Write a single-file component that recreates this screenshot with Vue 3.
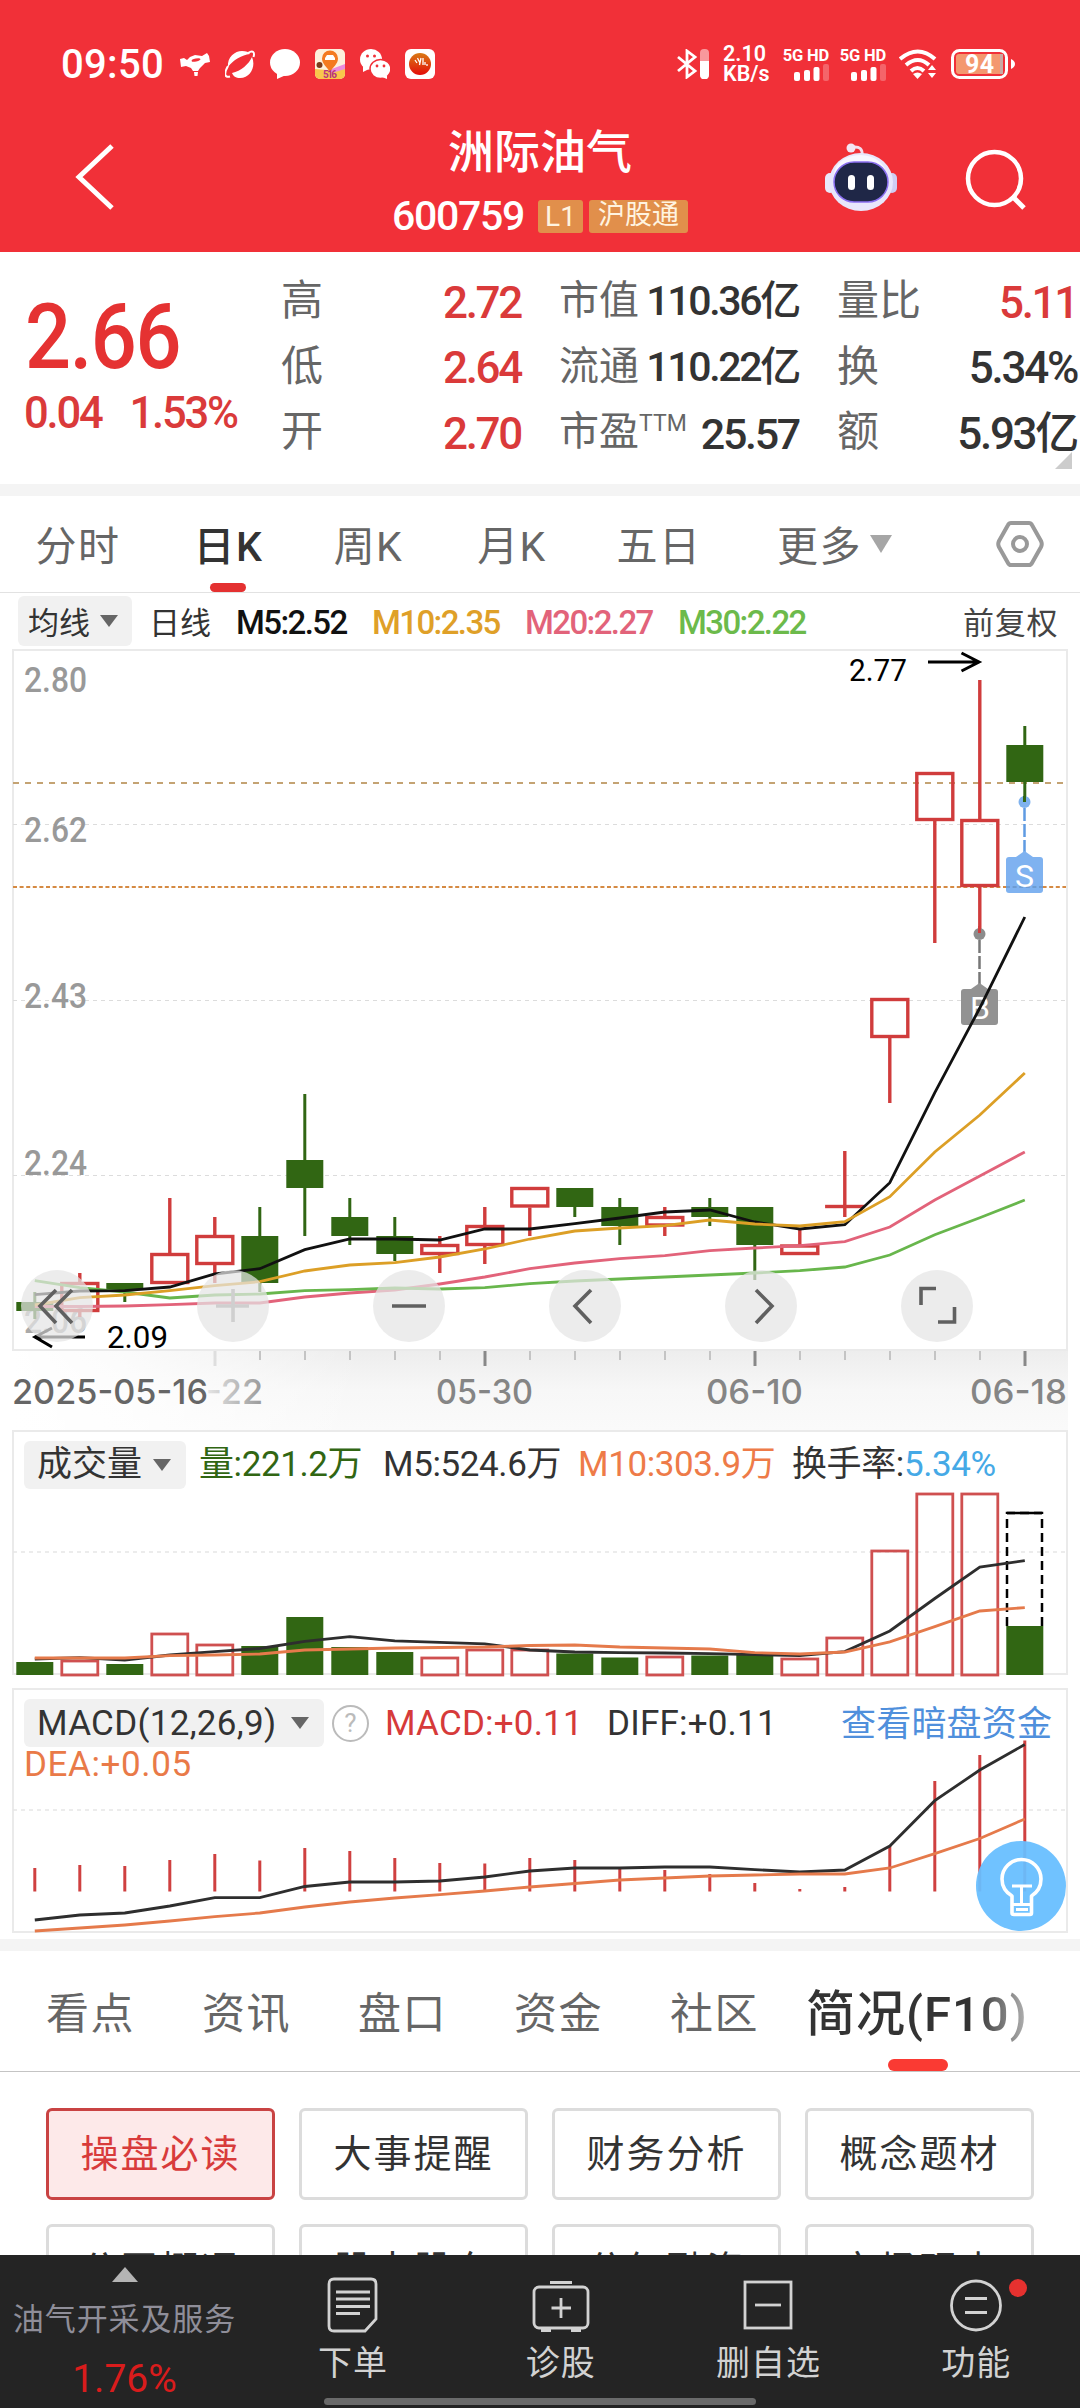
<template>
  <div class="page">
    <div class="statusbar">
      <span class="statusbar__time">09:50</span>
      <div class="statusbar__apps">
        <svg width="30" height="30" viewBox="0 0 30 30">
          <path d="M0 10L4 9L7 11L10 8L15 6L22 7L27 4L29 7L30 13L25 14L20 19L18 22H13L11 19L6 17L1 18Z" fill="#fff" />
          <ellipse cx="16" cy="11" rx="4.500" ry="1.500" fill="#f13038" transform="rotate(-12 16 11)" />
          <path d="M14 23H18L17.500 27H14.500Z" fill="#fff" />
        </svg>
        <svg width="30" height="30" viewBox="0 0 30 30">
          <path d="M3 18C2 8 10 2 17 2C21 2 24 3 25 5C17 6 8 11 3 18Z" fill="#fff" />
          <path d="M7 24C16 22 24 15 27 8C31 17 26 29 15 29C11 29 8 27 7 24Z" fill="#fff" />
          <path d="M3 17C-1 24 -1 29 5 27.500M23 4C28 1 30 3 28.500 8" fill="none" stroke="#fff" stroke-width="2" />
        </svg>
        <svg width="30" height="30" viewBox="0 0 30 30">
          <ellipse cx="15" cy="13.500" rx="15" ry="13.500" fill="#fff" />
          <path d="M7 22V30L16 26Z" fill="#fff" />
        </svg>
        <svg width="30" height="30" viewBox="0 0 30 30">
          <rect width="30" height="30" rx="5" fill="#fdf0dc" />
          <path d="M0 20L12 21L30 18V25A5 5 0 0 1 25 30H5A5 5 0 0 1 0 25Z" fill="#f9c64c" />
          <circle cx="4.500" cy="16" r="3" fill="#7b3b1d" />
          <path d="M14 21L30 15V20L17 24Z" fill="#ec8bdc" />
          <path d="M15 23C12 18 7 15 7 9.500A8 8 0 0 1 23 9.500C23 15 18 18 15 23Z" fill="#f47a20" />
          <path d="M10 11V9L12 6H18L20 9V11Z" fill="#fff" />
          <text x="8" y="29" font-size="10" font-weight="700" fill="#b8337e" textLength="14">516</text>
        </svg>
        <svg width="30" height="30" viewBox="0 0 30 30">
          <ellipse cx="11" cy="10.500" rx="11" ry="10.500" fill="#fff" />
          <path d="M3 17V23L9 20Z" fill="#fff" />
          <ellipse cx="20.500" cy="20" rx="10.500" ry="9.500" fill="#fff" stroke="#f13038" stroke-width="1.500" />
          <path d="M22 28L27 30V26Z" fill="#fff" />
          <g fill="#f13038">
            <circle cx="7.500" cy="7" r="1.500" />
            <circle cx="14.500" cy="7" r="1.500" />
            <circle cx="17" cy="17" r="1.400" />
            <circle cx="24" cy="17" r="1.400" />
          </g>
        </svg>
        <svg width="30" height="30" viewBox="0 0 30 30">
          <defs>
            <linearGradient id="ball" x1="0" y1="0" x2="0" y2="1">
              <stop offset="0" stop-color="#d97a14" />
              <stop offset="1" stop-color="#e30d0a" />
            </linearGradient>
          </defs>
          <rect width="30" height="30" rx="6" fill="#fff" />
          <circle cx="15" cy="15" r="11" fill="url(#ball)" />
          <path d="M10 11L12 14M12.500 9L15 14M16 9L14.500 16M18 9V16M20 13V16M22 15V17" stroke="#fff" stroke-width="1.300" />
        </svg>
      </div>
      <div class="statusbar__system">
        <svg width="34" height="30" viewBox="0 0 34 30">
          <path d="M2 8L19 22L11 28V2L19 8L2 22" fill="none" stroke="#fff" stroke-width="2.800" />
          <rect x="24" y="0" width="9" height="30" rx="4" fill="#fff" opacity=".5" />
          <path d="M24 12H33V26A4 4 0 0 1 24 26Z" fill="#fff" />
        </svg>
        <div class="speed">
          <span>2.10</span>
          <span>KB/s</span>
        </div>
        <div v-for="n in 2" :key="n" class="signal">
          <span>5G HD</span>
          <svg width="35" height="17" viewBox="0 0 35 17" fill="#fff">
            <rect x="0" y="8" width="6" height="9" rx="2" />
            <rect x="10" y="6" width="6" height="11" rx="2" />
            <rect x="19.500" y="3" width="6" height="14" rx="2" />
            <rect x="29" y="0" width="6" height="17" rx="2" opacity=".25" />
          </svg>
        </div>
        <svg class="wifi" width="38" height="30" viewBox="0 0 38 30">
          <g fill="none" stroke="#fff" stroke-width="4">
            <path d="M1 10Q19 -5 36 10" />
            <path d="M7 16Q19 6 30 16" />
            <path d="M12 22Q18.500 16 25 22" />
          </g>
          <path d="M14 25Q18.500 22 23 25L18.500 30Z" fill="#fff" />
          <path d="M29 21L33 16L37 21ZM29 24H37L33 29Z" fill="#fff" />
        </svg>
        <svg width="65" height="30" viewBox="0 0 65 30">
          <rect x="1.500" y="1.500" width="54" height="27" rx="7" fill="none" stroke="#fff" stroke-width="3" />
          <rect x="5" y="5" width="47" height="20" rx="3" fill="#f4986f" />
          <rect x="49" y="5" width="3" height="20" fill="#c9a9a4" />
          <path d="M60 10Q64 12 64 15Q64 18 60 20Z" fill="#fff" />
          <text x="14" y="24" font-size="25" font-weight="700" fill="#fff" textLength="29">94</text>
        </svg>
      </div>
    </div>

    <header class="header">
      <svg class="header__back" width="40" height="66" viewBox="0 0 40 66">
        <path d="M37 2L4 33L37 64" fill="none" stroke="#fff" stroke-width="5" />
      </svg>
      <div class="header__title">
        <div class="header__name">洲际油气</div>
        <div class="header__meta">
          <span class="header__code">600759</span>
          <span class="tag">L1</span>
          <span class="tag tag--cn">沪股通</span>
        </div>
      </div>
      <svg class="header__robot" width="72" height="68" viewBox="0 0 72 68">
        <path d="M28 4Q38 3 37 12" fill="none" stroke="#f3dfee" stroke-width="3" />
        <circle cx="26" cy="5" r="4.500" fill="#f3e6f4" />
        <rect x="0" y="30" width="10" height="20" rx="5" fill="#e9e9fb" />
        <rect x="62" y="30" width="10" height="20" rx="5" fill="#cfcdf3" />
        <ellipse cx="36" cy="39" rx="32" ry="29" fill="#e8e6fb" />
        <ellipse cx="35" cy="32" rx="26" ry="20" fill="#f8f7ff" />
        <rect x="9" y="19" width="54" height="40" rx="20" fill="#1f2747" stroke="#8a6ff0" stroke-width="1.500" />
        <rect x="23" y="32" width="7" height="15" rx="3.500" fill="#fff" />
        <rect x="42" y="32" width="7" height="15" rx="3.500" fill="#fff" />
      </svg>
      <svg class="header__search" width="62" height="62" viewBox="0 0 62 62" fill="none" stroke="#fff" stroke-width="4.500">
        <circle cx="30.500" cy="30.500" r="26.500" />
        <path d="M48 48L60 60" stroke-width="5" />
      </svg>
    </header>

    <section class="quote">
      <div class="quote__main">
        <div class="quote__price">2.66</div>
        <div class="quote__change"><span>0.04</span><span>1.53%</span></div>
      </div>
      <dl class="quote__col quote__col--a">
        <div v-for="r in prices" :key="r.k" class="quote__row">
          <dt>{{ r.k }}</dt>
          <dd class="up">{{ r.v }}</dd>
        </div>
      </dl>
      <dl class="quote__col quote__col--b">
        <div v-for="r in values" :key="r.k" class="quote__row">
          <dt>{{ r.k }}<sup v-if="r.sup">{{ r.sup }}</sup></dt>
          <dd :class="{ big: r.sup }">{{ r.v }}</dd>
        </div>
      </dl>
      <dl class="quote__col quote__col--c">
        <div v-for="r in ratios" :key="r.k" class="quote__row">
          <dt>{{ r.k }}</dt>
          <dd :class="{ up: r.up }">{{ r.v }}</dd>
        </div>
      </dl>
      <i class="quote__corner"></i>
    </section>

    <nav class="periods">
      <span v-for="p in periods" :key="p" class="periods__item" :class="{ 'periods__item--on': p === '日K' }">{{ p }}</span>
      <span class="periods__item">更多<i class="caret caret--more"></i></span>
      <svg class="periods__setting" width="48" height="46" viewBox="0 0 48 46" fill="none" stroke="#999" stroke-width="4">
        <path d="M15 2H33Q35 2 36 4L45 20Q46.500 23 45 26L36 42Q35 44 33 44H15Q13 44 12 42L3 26Q1.500 23 3 20L12 4Q13 2 15 2Z" />
        <circle cx="24" cy="23" r="7" />
      </svg>
    </nav>

    <div class="legend">
      <span class="picker">均线<i class="caret"></i></span>
      <span class="legend__day">日线</span>
      <b style="color: #111">M5:2.52</b>
      <b style="color: #dfa028">M10:2.35</b>
      <b style="color: #e2637a">M20:2.27</b>
      <b style="color: #6cba4b">M30:2.22</b>
      <span class="legend__fq">前复权</span>
    </div>

    <section class="kline">
      <svg width="1080" height="782" viewBox="0 648 1080 782">
        <defs>
          <linearGradient id="fadeY" x1="0" y1="0" x2="0" y2="1">
            <stop offset="0" stop-color="#ededed" />
            <stop offset=".5" stop-color="#f7f7f7" />
            <stop offset="1" stop-color="#fafafa" />
          </linearGradient>
          <linearGradient id="fadeX" x1="0" y1="0" x2="1" y2="0">
            <stop offset="0" stop-color="#fff" />
            <stop offset=".3" stop-color="#fff" stop-opacity=".8" />
            <stop offset="1" stop-color="#fff" stop-opacity="0" />
          </linearGradient>
          <linearGradient id="date" x1="0" y1="0" x2="1" y2="0">
            <stop offset="0" stop-color="#e6e6e6" />
            <stop offset="1" stop-color="#999" />
          </linearGradient>
        </defs>
        <rect x="13" y="1350" width="1055" height="80" fill="url(#fadeY)" />
        <rect x="13" y="1350" width="350" height="80" fill="url(#fadeX)" />
        <rect x="13" y="650" width="1054" height="700" fill="none" stroke="#eaeaea" stroke-width="2" />
        <g stroke="#dcdcdc" stroke-width="1.200" stroke-dasharray="4 4">
          <path v-for="y in [824.500, 1000.500, 1175.500]" :key="y" :d="`M13 ${y}H1066`" />
        </g>
        <path d="M13 783H1066" stroke="#c4a373" stroke-width="2" stroke-dasharray="6 6" />
        <path d="M13 887H1066" stroke="#d58a43" stroke-width="2" stroke-dasharray="4 2.600" />

        <g class="ylabel">
          <text v-for="l in yLabels" :key="l.t" x="24" :y="l.y" textLength="63" lengthAdjust="spacingAndGlyphs" :fill="l.c">{{ l.t }}</text>
        </g>

        <g v-for="c in candleShapes" :key="c.x">
          <template v-if="c.up">
            <path :d="`M${c.x} ${c.high}V${c.top}M${c.x} ${c.bottom}V${c.low}`" stroke="#d03c3c" stroke-width="3.400" />
            <rect :x="c.x - 18" :y="c.top + 1.5" width="36" :height="c.bottom - c.top - 3" fill="none" stroke="#d03c3c" stroke-width="3.400" />
          </template>
          <template v-else>
            <path :d="`M${c.x} ${c.high}V${c.low}`" stroke="#316613" stroke-width="3" />
            <rect :x="c.x - 18.5" :y="c.top" width="37" :height="c.bottom - c.top" fill="#316613" />
          </template>
        </g>

        <!-- trade marks -->
        <g>
          <path d="M1024.500 808V852" stroke="#5f9be2" stroke-width="2.500" stroke-dasharray="13 3" />
          <circle cx="1024.500" cy="802" r="6" fill="#7fb2ee" />
          <path d="M1024.500 796V802" stroke="#316613" stroke-width="3" />
          <path d="M1016 857L1024.500 851L1033 857Z" fill="#7fb2f0" />
          <rect x="1006" y="857" width="37" height="36" rx="3" fill="#7fb2f0" />
          <path d="M1006 887H1043" stroke="#6a95c8" stroke-width="1.500" stroke-dasharray="4 2.600" />
          <text x="1024.500" y="887" class="mark">S</text>
          <path d="M979.500 940V984" stroke="#777" stroke-width="2.500" stroke-dasharray="13 3" />
          <circle cx="979.500" cy="934" r="6" fill="#8c8c8c" />
          <path d="M979.500 926V933" stroke="#d03c3c" stroke-width="3" />
          <path d="M971 989L979.500 983L988 989Z" fill="#929292" />
          <rect x="961" y="989" width="37" height="36" rx="3" fill="#929292" />
          <text x="980" y="1019" class="mark">B</text>
        </g>

        <polyline v-for="m in maLines" :key="m.color" :points="m.points" fill="none" :stroke="m.color" stroke-width="2.800" />

        <g fill="none" stroke="#000" stroke-width="3">
          <path d="M928 662H979M961.500 653L979 662L961.500 671" />
          <path d="M85 1337H35M52 1328L35 1337L52 1347" />
        </g>
        <text x="849" y="681" class="extreme" textLength="58" lengthAdjust="spacingAndGlyphs">2.77</text>
        <text x="107" y="1348" class="extreme" textLength="61" lengthAdjust="spacingAndGlyphs">2.09</text>

        <path v-for="t in ticks" :key="t.x" :d="`M${t.x} 1351v${t.h}`" :stroke="t.c" :stroke-width="t.w" />
        <g class="date">
          <text x="12" y="1404" textLength="196" lengthAdjust="spacingAndGlyphs" fill="#666">2025-05-16</text>
          <text x="206" y="1404" textLength="57" lengthAdjust="spacingAndGlyphs" fill="url(#date)">-22</text>
          <text x="436" y="1404" textLength="97" lengthAdjust="spacingAndGlyphs">05-30</text>
          <text x="706" y="1404" textLength="97" lengthAdjust="spacingAndGlyphs">06-10</text>
          <text x="970" y="1404" textLength="97" lengthAdjust="spacingAndGlyphs">06-18</text>
        </g>
      </svg>
      <div class="tools">
        <button v-for="t in tools" :key="t.d" class="tools__btn">
          <svg width="72" height="72" viewBox="0 0 72 72">
            <path :d="t.d" fill="none" :stroke="t.c || '#606060'" stroke-width="3.600" />
          </svg>
        </button>
      </div>
    </section>

    <section class="panel panel--volume">
      <svg width="1080" height="258" viewBox="0 1430 1080 258">
        <path d="M13 1675V1430M1067 1675V1430M12 1431H1068M12 1674H1068" fill="none" stroke="#eaeaea" stroke-width="2" />
        <path d="M13 1552H1066" stroke="#e6e6e6" stroke-width="1.500" stroke-dasharray="4 4" />
        <g v-for="b in volumeBars" :key="b.x">
          <rect v-if="b.up" :x="b.x - 18" :y="b.top + 1" width="36" :height="1674 - b.top" fill="none" stroke="#cf5050" stroke-width="2.800" />
          <rect v-else :x="b.x - 18.5" :y="b.top" width="37" :height="1675 - b.top" fill="#316613" />
        </g>
        <path d="M1007 1626V1513H1042V1626" fill="none" stroke="#000" stroke-width="2.500" stroke-dasharray="9 5" />
        <path d="M1007 1513H1042" stroke="#000" stroke-width="2.500" />
        <polyline v-for="m in volumeLines" :key="m.color" :points="m.points" fill="none" :stroke="m.color" stroke-width="2.800" />
      </svg>
      <div class="panel__head panel__head--volume">
        <span class="picker picker--lg">成交量<i class="caret"></i></span>
        <span class="vol">量:221.2万</span>
        <span>M5:524.6万</span>
        <span class="orange">M10:303.9万</span>
        <span>换手率:<em>5.34%</em></span>
      </div>
    </section>

    <section class="panel panel--macd">
      <svg width="1080" height="251" viewBox="0 1688 1080 251">
        <rect x="13" y="1689" width="1054" height="243" fill="none" stroke="#eaeaea" stroke-width="2" />
        <path d="M13 1810H1066" stroke="#e6e6e6" stroke-width="1.500" stroke-dasharray="4 4" />
        <path v-for="b in macdBars" :key="b.x" :d="`M${b.x} ${b.top}V1891.500`" stroke="#cf4040" stroke-width="3" />
        <polyline v-for="m in macdLines" :key="m.color" :points="m.points" fill="none" :stroke="m.color" stroke-width="2.800" />
      </svg>
      <div class="panel__head panel__head--macd">
        <span class="picker picker--lg">MACD(12,26,9)<i class="caret"></i></span>
        <span class="help">?</span>
        <span class="red">MACD:+0.11</span>
        <span>DIFF:+0.11</span>
        <a>查看暗盘资金</a>
      </div>
      <div class="panel__dea">DEA:+0.05</div>
      <svg class="bulb" width="90" height="90" viewBox="0 0 90 90">
        <circle cx="45" cy="45" r="45" fill="#67beff" opacity=".94" />
        <g fill="none" stroke="#fff" stroke-width="3.600" stroke-linejoin="round">
          <path d="M36 72V55Q26 49 26 38A19.500 19.500 0 0 1 65 38Q65 49 55.500 55V72Q55.500 73.500 54 73.500H38Q36 73.500 36 72Z" />
          <path d="M36 45H56M45.500 45V62M36 63.500H55.500M40 68.500H52" stroke-width="3" />
        </g>
      </svg>
    </section>

    <nav class="tabs">
      <span v-for="t in ['看点', '资讯', '盘口', '资金', '社区']" :key="t" class="tabs__item">{{ t }}</span>
      <span class="tabs__item tabs__item--on"><b>简况(F10)</b></span>
    </nav>

    <section class="cards">
      <div v-for="(c, i) in cards" :key="c" class="cards__item" :class="{ 'cards__item--on': i === 0 }">{{ c }}</div>
    </section>

    <footer class="bottom">
      <div class="bottom__sector">
        <i class="bottom__up"></i>
        <span class="bottom__name">油气开采及服务</span>
        <span class="bottom__pct">1.76%</span>
      </div>
      <div class="bottom__item">
        <svg width="56" height="56" viewBox="0 0 56 56" fill="none" stroke="#d2d2d2" stroke-width="2.800">
          <path d="M9 2H46Q51 2 51 7V42L40 54H9Q4 54 4 49V7Q4 2 9 2Z" />
          <path d="M11 15H45M11 22H45M11 29.500H45M11 36.500H35" />
        </svg>
        <span>下单</span>
      </div>
      <div class="bottom__item">
        <svg width="60" height="56" viewBox="0 0 60 56" fill="none" stroke="#d2d2d2" stroke-width="2.800">
          <rect x="3" y="10" width="54" height="41" rx="5" />
          <path d="M19 5.500H41M20.500 31H40M30 21V41M10 53.500H20M40 53.500H50" />
        </svg>
        <span>诊股</span>
      </div>
      <div class="bottom__item">
        <svg width="56" height="56" viewBox="0 0 56 56" fill="none" stroke="#d2d2d2" stroke-width="2.800">
          <rect x="5" y="5" width="46" height="46" />
          <path d="M15 28H41" />
        </svg>
        <span>删自选</span>
      </div>
      <div class="bottom__item">
        <svg width="56" height="56" viewBox="0 0 56 56" fill="none" stroke="#d2d2d2" stroke-width="2.800">
          <circle cx="28" cy="28.500" r="24.500" />
          <path d="M17 21.500H39M17 35.500H39" />
        </svg>
        <span>功能</span>
        <i class="bottom__dot"></i>
      </div>
      <i class="bottom__home"></i>
    </footer>
  </div>
</template>

<script setup>
const prices = [
  { k: '高', v: '2.72' },
  { k: '低', v: '2.64' },
  { k: '开', v: '2.70' },
]
const values = [
  { k: '市值', v: '110.36亿' },
  { k: '流通', v: '110.22亿' },
  { k: '市盈', sup: 'TTM', v: '25.57' },
]
const ratios = [
  { k: '量比', v: '5.11', up: true },
  { k: '换', v: '5.34%' },
  { k: '额', v: '5.93亿' },
]
const periods = ['分时', '日K', '周K', '月K', '五日']
const cards = ['操盘必读', '大事提醒', '财务分析', '概念题材', '公司概况', '股本股东', '分红融资', '市场观点']

const xAt = (i) => +(34.8 + i * 45).toFixed(1)
const toPoints = (ys) => ys.map((y, i) => `${xAt(i)},${y}`).join(' ')

// [up, top, bottom, high, low] in chart pixels
const candles = [
  [0, 1302, 1311, 1292, 1319],
  [1, 1282, 1312, 1273, 1317],
  [0, 1283, 1290, 1283, 1302],
  [1, 1253, 1284, 1198, 1284],
  [1, 1235, 1265, 1217, 1283],
  [0, 1236, 1283, 1207, 1292],
  [0, 1160, 1188, 1094, 1236],
  [0, 1217, 1236, 1198, 1245],
  [0, 1236, 1254, 1217, 1261],
  [1, 1244, 1255, 1236, 1273],
  [1, 1225, 1246, 1207, 1264],
  [1, 1187, 1207.5, 1187, 1236],
  [0, 1188, 1207, 1188, 1217],
  [0, 1207, 1226, 1198, 1245],
  [1, 1216, 1226.5, 1207, 1236],
  [0, 1207, 1217, 1198, 1226],
  [0, 1207, 1245, 1207, 1280],
  [1, 1244.5, 1255, 1229, 1255],
  [1, 1205, 1208.01, 1151, 1217],
  [1, 998, 1038, 998, 1103],
  [1, 772, 821, 772, 943],
  [1, 819, 887, 680, 933],
  [0, 745, 782, 726, 802],
]
const candleShapes = candles.map(([up, top, bottom, high, low], i) => ({ up: up === 1, x: xAt(i), top, bottom, high, low }))

const maLines = [
  { color: '#e2637a', points: toPoints([1306.5, 1306.5, 1306, 1304.7, 1303, 1303, 1297, 1293, 1290, 1284, 1277, 1268.7, 1263, 1258.7, 1255.7, 1250.7, 1248, 1245.7, 1241.7, 1227, 1200, 1176, 1152]) },
  { color: '#68b64c', points: toPoints([1280.7, 1287.7, 1292, 1298, 1295, 1294, 1290.7, 1289.7, 1288, 1289, 1287.7, 1283.7, 1281, 1279, 1277, 1275, 1273, 1270.7, 1267, 1255, 1234.7, 1217.7, 1200]) },
  { color: '#111', points: toPoints([1294.7, 1291, 1290.7, 1287, 1274, 1268.7, 1249.7, 1239, 1239, 1240, 1229, 1229, 1223.7, 1218, 1212, 1210, 1222, 1229, 1224.7, 1182.7, 1092.7, 1008, 917]) },
  { color: '#dc9f26', points: toPoints([1305, 1297.7, 1295, 1290.7, 1285.7, 1281.7, 1271, 1265, 1262.7, 1257, 1249, 1239, 1231, 1228, 1225.7, 1220, 1224, 1226, 1221.7, 1196.7, 1152, 1115, 1073]) },
]

const yLabels = [
  { t: '2.80', y: 692, c: '#999' },
  { t: '2.62', y: 842, c: '#999' },
  { t: '2.43', y: 1008, c: '#999' },
  { t: '2.24', y: 1175, c: '#999' },
  { t: '2.06', y: 1333, c: '#aaa' },
]

const ticks = Array.from({ length: 19 }, (_, n) => {
  const i = n + 4
  const major = i % 6 === 4
  return { x: xAt(i) + 0.2, h: major ? 15 : 9, w: major ? 3 : 2, c: i === 4 ? '#dedede' : major ? '#888' : '#c4c4c4' }
})

const tools = [
  { d: 'M35 20L19 36L35 53M51 20L35 36L51 53' },
  { d: 'M19 36H52M36 19V52', c: '#cfcfcf' },
  { d: 'M19 36H53' },
  { d: 'M42 20L26 36L42 53' },
  { d: 'M31 20L47 36L31 53' },
  { d: 'M20 35V18.500H35M37 52H53.500V37' },
]

const volumes = [
  [0, 1662], [1, 1660], [0, 1664], [1, 1633], [1, 1644], [0, 1646], [0, 1617], [0, 1647],
  [0, 1652], [1, 1657], [1, 1649], [1, 1649], [0, 1653.5], [0, 1657.5], [1, 1656], [0, 1655.5],
  [0, 1654.5], [1, 1658], [1, 1637], [1, 1550], [1, 1493], [1, 1493], [0, 1626],
]
const volumeBars = volumes.map(([up, top], i) => ({ up: up === 1, top, x: xAt(i) }))
const volumeLines = [
  { color: '#2e2e2e', points: toPoints([1659, 1657.6, 1660, 1655, 1651.6, 1648.5, 1641.4, 1636.7, 1640.8, 1642.4, 1643.8, 1650, 1652, 1652.6, 1653, 1653.6, 1654.6, 1655.6, 1651.6, 1631, 1598.5, 1567, 1560.6]) },
  { color: '#e57a4b', points: toPoints([1658, 1658, 1658, 1655.6, 1655, 1654, 1650, 1649, 1648, 1647.5, 1647, 1645.5, 1645, 1647, 1648, 1649, 1652.6, 1654, 1652, 1641.8, 1626.6, 1611, 1607.6]) },
]

const macd = [1868, 1865, 1866, 1860, 1854, 1860.5, 1848, 1851, 1858, 1863, 1863.5, 1858, 1860, 1868, 1870, 1874, 1883, 1889, 1887, 1846, 1781, 1755, 1740.5]
const macdBars = macd.map((top, i) => ({ top, x: xAt(i) }))
const macdLines = [
  { color: '#2e2e2e', points: toPoints([1920, 1915, 1913, 1906, 1897.7, 1897.7, 1886.5, 1882, 1882, 1881, 1877, 1871, 1868, 1868, 1867, 1867, 1869.6, 1872, 1870, 1846, 1800.7, 1770, 1744.5]) },
  { color: '#e57a4b', points: toPoints([1931, 1928, 1925, 1921, 1916.6, 1913, 1907, 1902, 1898, 1894.6, 1891, 1887, 1883.5, 1880, 1878, 1876, 1875, 1874, 1874, 1868, 1853.7, 1838.5, 1819]) },
]
</script>

<style>
body {
  margin: 0;
  background: #fff;
}
</style>

<style scoped>
.page {
  position: relative;
  display: flex;
  flex-direction: column;
  width: 1080px;
  height: 2408px;
  overflow: hidden;
  background: #fff;
  color: #333;
  font-family: Roboto, 'Noto Sans CJK SC', sans-serif;
  white-space: nowrap;
}

svg {
  display: block;
  flex-shrink: 0;
}

dl,
dd {
  margin: 0;
}

/* status bar */
.statusbar {
  display: flex;
  align-items: center;
  box-sizing: border-box;
  height: 126px;
  padding: 2px 64px 0 61px;
  background: #f13038;
  color: #fff;
}

.statusbar__time {
  width: 119px;
  font-size: 40px;
  font-weight: 500;
  letter-spacing: 0.3px;
}

.statusbar__apps {
  display: flex;
  gap: 15px;
}

.statusbar__system {
  display: flex;
  align-items: center;
  margin-left: auto;
}

.speed {
  display: flex;
  flex-direction: column;
  width: 44px;
  margin: 0 14px 0 13px;
  font-size: 21.500px;
  font-weight: 600;
  line-height: 20px;
}

.signal {
  display: flex;
  flex-direction: column;
  align-items: flex-end;
  width: 48px;
  margin-right: 9px;
  font-size: 16.500px;
  font-weight: 700;
  line-height: 16px;
}

.signal span {
  letter-spacing: -0.200px;
}

.wifi {
  margin: 0 14px 0 4px;
}

/* header */
.header {
  display: flex;
  position: relative;
  height: 126px;
  background: #f13038;
  color: #fff;
}

.header__back {
  margin: 18px 0 0 75px;
}

.header__title {
  width: 300px;
  margin-left: 275px;
  text-align: center;
}

.header__name {
  font-size: 46px;
  font-weight: 500;
  line-height: 52px;
}

.header__meta {
  display: flex;
  justify-content: center;
  align-items: center;
  height: 34px;
  margin-top: 21px;
}

.header__code {
  margin-right: 14px;
  font-size: 41px;
  font-weight: 500;
  letter-spacing: -1.3px;
}

.tag {
  box-sizing: border-box;
  width: 45px;
  height: 33px;
  border-radius: 3px;
  background: #e18f4b;
  color: #fff4e0;
  font-size: 28px;
  line-height: 34px;
  text-align: center;
}

.tag--cn {
  width: 99px;
  margin-left: 6px;
  font-size: 27px;
  line-height: 31px;
}

.header__robot {
  margin: 17px 0 0 135px;
}

.header__search {
  margin: 22px 0 0 67px;
}

/* quote */
.quote {
  position: relative;
  display: flex;
  box-sizing: border-box;
  height: 244px;
  border-bottom: 12px solid #f4f4f4;
}

.quote__main {
  width: 281px;
}

.quote__price {
  height: 90px;
  margin: 41px 0 0 25px;
  color: #e53232;
  font-size: 90px;
  font-weight: 500;
  letter-spacing: -1.500px;
  line-height: 90px;
  transform: scaleX(0.9);
  transform-origin: 0 50%;
}

.quote__change {
  display: flex;
  gap: 28px;
  margin: 5px 0 0 24px;
  color: #da3a3a;
  font-size: 43.500px;
  font-weight: 500;
  letter-spacing: -2.200px;
  line-height: 52px;
}

.quote__col {
  display: flex;
  flex-direction: column;
  padding-top: 18px;
}

.quote__col--a {
  width: 240px;
}

.quote__col--b {
  width: 240px;
  margin-left: 38px;
}

.quote__col--c {
  width: 240px;
  margin-left: 38px;
}

.quote__row {
  display: flex;
  justify-content: space-between;
  align-items: center;
  height: 65.500px;
}

.quote__row dt {
  color: #666;
  font-size: 42px;
  line-height: 60px;
  margin-top: -3px;
}

.quote__row dd {
  font-size: 44px;
  font-weight: 500;
  letter-spacing: -2.300px;
  line-height: 60px;
}

.quote__row .up {
  color: #da3a3a;
}

.quote__col--b dt {
  font-size: 40px;
}

.quote__col--b dd {
  margin-top: -3px;
  font-size: 41px;
  letter-spacing: -2.300px;
}

.quote__col--b .big {
  margin-top: 0;
  font-size: 43px;
}

.quote__row sup {
  font-size: 23px;
  line-height: 0;
  vertical-align: 14px;
}

.quote__corner {
  position: absolute;
  right: 8px;
  bottom: 15px;
  border: solid transparent;
  border-width: 0 0 17px 17px;
  border-bottom-color: #ccc;
}

/* period tabs */
.periods {
  display: grid;
  grid-template-columns: 156px 145px 135px 152px 142px 209px 141px;
  align-items: center;
  justify-items: center;
  box-sizing: border-box;
  height: 97px;
  border-bottom: 1px solid #e2e2e2;
}

.periods__item {
  position: relative;
  margin-top: -3px;
  color: #666;
  font-size: 41px;
  letter-spacing: 1.500px;
}

.periods__item--on {
  color: #333;
  font-weight: 500;
}

.periods__item--on::after {
  content: '';
  position: absolute;
  left: 50%;
  bottom: -19px;
  width: 36px;
  height: 9px;
  margin-left: -19px;
  border-radius: 5px;
  background: #e43131;
}

.periods__setting {
  margin-left: 21px;
}

.caret {
  display: inline-block;
  margin-left: 10px;
  border: solid transparent;
  border-width: 12px 9px 0;
  border-top-color: #666;
  vertical-align: 5px;
}

.caret--more {
  margin-left: 8px;
  border-width: 18px 11px 0;
  border-top-color: #a6a6a6;
  vertical-align: 8px;
}

/* MA legend */
.legend {
  display: grid;
  grid-template-columns: 131px 87px 136px 153px 153px 285px auto;
  align-items: center;
  height: 55px;
  padding-left: 18px;
  font-size: 31px;
}

.legend b {
  margin-top: 4px;
  font-size: 33px;
  font-weight: 500;
  letter-spacing: -1.600px;
}

.legend__fq {
  color: #444;
  letter-spacing: 0.800px;
}

.picker {
  display: inline-flex;
  align-items: center;
  justify-self: start;
  box-sizing: border-box;
  width: 114px;
  height: 50px;
  padding-left: 10px;
  border-radius: 6px;
  background: #f1f1f1;
  color: #333;
}

/* k line */
.kline {
  position: relative;
  height: 782px;
}

.ylabel text {
  font-size: 35px;
  font-weight: 500;
}

.mark {
  fill: #fff;
  font-size: 32px;
  text-anchor: middle;
}

.extreme {
  font-size: 31px;
}

.date text {
  font-family: Inter, sans-serif;
  font-size: 34px;
  font-weight: 500;
}

.date {
  fill: #858585;
}

.tools {
  position: absolute;
  left: 21px;
  top: 622px;
  display: flex;
  gap: 104px;
}

.tools__btn {
  width: 72px;
  height: 72px;
  padding: 0;
  border: none;
  border-radius: 50%;
  background: rgba(229, 229, 229, 0.72);
}

/* indicator panels */
.panel {
  position: relative;
}

.panel--volume {
  height: 258px;
}

.panel--macd {
  height: 251px;
  border-bottom: 12px solid #f4f4f4;
}

.panel__head {
  position: absolute;
  left: 24px;
  top: 11px;
  display: grid;
  align-items: center;
  height: 48px;
  font-size: 35px;
}

.panel__head--volume {
  grid-template-columns: 175px 184px 195px 214px auto;
  letter-spacing: -0.400px;
}

.panel__head--volume > span {
  line-height: 48px;
}

.panel__head--macd {
  grid-template-columns: 308px 53px 222px 234px auto;
  letter-spacing: 0.200px;
}

.picker--lg {
  width: 162px;
  height: 48px;
  padding-left: 13px;
  letter-spacing: 0;
}

.picker--lg .caret {
  margin-left: auto;
  margin-right: 15px;
}

.panel__head--macd .picker--lg {
  width: 300px;
  letter-spacing: 0.300px;
}

.vol {
  color: #316613;
}

.orange {
  color: #ee7b48;
}

.red {
  color: #d63a3a;
}

.panel__head em {
  color: #45a9e6;
  font-style: normal;
}

.panel__head a {
  margin-top: -5px;
  color: #4f8fdc;
}

.help {
  box-sizing: border-box;
  width: 37px;
  height: 37px;
  border: 2.500px solid #bbb;
  border-radius: 50%;
  color: #bbb;
  font-size: 26px;
  line-height: 32px;
  text-align: center;
}

.panel__dea {
  position: absolute;
  left: 24px;
  top: 57px;
  color: #e97a48;
  font-size: 35px;
  letter-spacing: 0.600px;
  line-height: 40px;
}

.bulb {
  position: absolute;
  left: 976px;
  top: 153px;
}

/* info tabs */
.tabs {
  display: flex;
  align-items: center;
  box-sizing: border-box;
  height: 121px;
  padding: 0 0 2px 46px;
  border-bottom: 1px solid #c4c4c4;
}

.tabs__item {
  width: 156px;
  color: #666;
  font-size: 43px;
  letter-spacing: 1.500px;
}

.tabs__item--on {
  position: relative;
  width: 224px;
  margin-left: -20px;
  color: #333;
  font-size: 49px;
  letter-spacing: 1px;
}

.tabs__item--on b {
  position: relative;
  top: -1px;
  font-weight: 500;
  background: linear-gradient(90deg, #333 76%, #aaa 98%);
  -webkit-background-clip: text;
  background-clip: text;
  color: transparent;
}

.tabs__item--on::after {
  content: '';
  position: absolute;
  left: 82px;
  bottom: -25px;
  width: 60px;
  height: 12px;
  border-radius: 6px;
  background: #fa3a33;
}

.cards {
  display: grid;
  grid-template-columns: repeat(4, 229px);
  gap: 24px;
  padding: 36px 0 0 46px;
  height: 147px;
}

.cards__item {
  box-sizing: border-box;
  height: 92px;
  border: 3px solid #dcdcdc;
  border-radius: 6px;
  font-size: 38px;
  letter-spacing: 2px;
  line-height: 86px;
  text-align: center;
}

.cards__item--on {
  border-color: #c94343;
  background: #fde9e9;
  color: #d83b3b;
}

/* bottom bar */
.bottom {
  position: relative;
  z-index: 1;
  display: grid;
  grid-template-columns: 249px repeat(4, 207.800px);
  height: 153px;
  background: #242424;
  color: #d2d2d2;
}

.bottom__sector {
  display: flex;
  flex-direction: column;
  align-items: center;
}

.bottom__up {
  margin-top: 12px;
  border: solid transparent;
  border-width: 0 13px 15px;
  border-bottom-color: #b4b4b4;
}

.bottom__name {
  margin-top: 16px;
  color: #8f8e99;
  font-size: 31px;
  letter-spacing: 0.900px;
  line-height: 44px;
}

.bottom__pct {
  margin-top: 15px;
  color: #d91c1c;
  font-size: 39px;
  line-height: 44px;
}

.bottom__item {
  position: relative;
  display: flex;
  flex-direction: column;
  align-items: center;
  padding-top: 22px;
  font-size: 34px;
  letter-spacing: 1px;
  line-height: 40px;
}

.bottom__item span {
  margin-top: 10px;
}

.bottom__dot {
  position: absolute;
  left: 137px;
  top: 24px;
  width: 18px;
  height: 18px;
  border-radius: 50%;
  background: #e6312f;
}

.bottom__home {
  position: absolute;
  left: 324px;
  bottom: 3px;
  width: 432px;
  height: 7px;
  border-radius: 4px;
  background: #6a6a6a;
}
</style>
